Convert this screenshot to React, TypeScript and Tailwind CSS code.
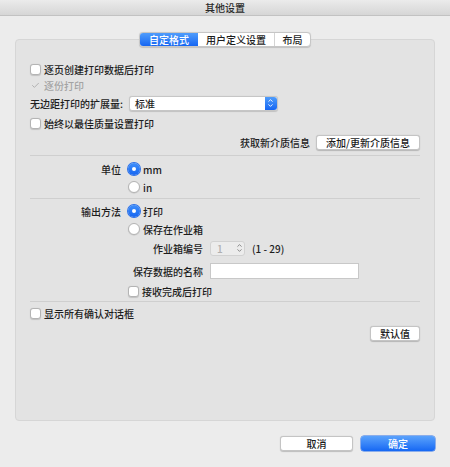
import { Check, ChevronDown, ChevronUp } from "lucide-react";

const font = "font-['Noto_Sans_CJK_SC','Noto_Sans',sans-serif]";

function CheckBox({ checked = false, disabled = false }: { checked?: boolean; disabled?: boolean }) {
  return (
    <span
      className={`flex size-[11px] shrink-0 items-center justify-center rounded-[3px] ${
        disabled ? "" : "border border-[#b4b4b4] bg-white shadow-[0_0.5px_1px_rgba(0,0,0,0.15)]"
      }`}
    >
      {checked && <Check className="size-[9px] text-[#a0a0a0]" strokeWidth={2} />}
    </span>
  );
}

function Radio({ on = false }: { on?: boolean }) {
  return on ? (
    <span className="flex size-[12px] shrink-0 items-center justify-center rounded-full bg-gradient-to-b from-[#3f8ffb] to-[#1665f1] shadow-[0_0_0_1px_#2a6fe8]">
      <span className="size-[4px] rounded-full bg-white" />
    </span>
  ) : (
    <span className="size-[12px] shrink-0 rounded-full border border-[#b4b4b4] bg-white shadow-[0_0.5px_1px_rgba(0,0,0,0.15)]" />
  );
}

function Button({ label, className = "" }: { label: string; className?: string }) {
  return (
    <button
      type="button"
      className={`flex h-[15px] items-center justify-center rounded-[3px] border border-[#c4c4c4] bg-white text-[10px] font-medium text-[#1a1a1a] shadow-[0_0.5px_1px_rgba(0,0,0,0.2)] ${className}`}
    >
      {label}
    </button>
  );
}

function Separator() {
  return <div className="h-px bg-[#cfcfcf]" />;
}

export default function App() {
  return (
    <div className={`flex h-[467px] w-[450px] flex-col bg-[#ececec] text-[10px] font-medium text-[#1d1d1d] ${font}`}>
      {/* Title bar */}
      <div className="flex h-[16px] shrink-0 items-center justify-center border-b border-[#c2c2c2] bg-gradient-to-b from-[#ebebeb] to-[#d6d6d6] text-[10px] text-[#2a2a2a]">
        其他设置
      </div>

      <div className="flex flex-col px-[15px] pt-[16px]">
        {/* Tabs */}
        <div className="relative z-10 mx-auto flex h-[15px] w-[172px] overflow-hidden rounded-[4px] border border-[#c6c6c6] bg-white shadow-[0_0.5px_1px_rgba(0,0,0,0.15)]">
          <div className="flex w-[58px] items-center justify-center bg-gradient-to-b from-[#4f9cfb] to-[#1565f2] text-white">
            自定格式
          </div>
          <div className="flex w-[77px] items-center justify-center border-r border-[#d4d4d4]">用户定义设置</div>
          <div className="flex flex-1 items-center justify-center">布局</div>
        </div>

        {/* Group box */}
        <div className="-mt-[8px] flex h-[382px] flex-col rounded-[4px] border border-[#d6d6d6] bg-[#e3e3e3] px-[14px] pt-[21px]">
          <div className="flex h-[16px] items-center gap-[3px]">
            <CheckBox />
            <span>逐页创建打印数据后打印</span>
          </div>
          <div className="flex h-[16px] items-center gap-[3px] text-[#a3a3a3]">
            <CheckBox checked disabled />
            <span>逐份打印</span>
          </div>
          <div className="flex h-[20px] items-center gap-[6px]">
            <span>无边距打印的扩展量:</span>
            <div className="flex h-[15px] w-[149px] items-center rounded-[3px] border border-[#c6c6c6] bg-white shadow-[0_0.5px_1px_rgba(0,0,0,0.15)]">
              <span className="flex-1 pl-[5px]">标准</span>
              <span className="flex h-full w-[12px] flex-col items-center justify-center rounded-r-[3px] bg-gradient-to-b from-[#4f9cfb] to-[#1565f2]">
                <ChevronUp className="-mb-[2px] size-[7px] text-white" strokeWidth={3} />
                <ChevronDown className="size-[7px] text-white" strokeWidth={3} />
              </span>
            </div>
          </div>
          <div className="flex h-[20px] items-center gap-[3px]">
            <CheckBox />
            <span>始终以最佳质量设置打印</span>
          </div>
          <div className="flex h-[18px] items-center justify-end gap-[6px]">
            <span>获取新介质信息</span>
            <Button label="添加/更新介质信息" className="w-[104px]" />
          </div>

          <div className="mt-[4px]">
            <Separator />
          </div>

          <div className="mt-[4px] flex">
            <span className="flex h-[18px] w-[91px] items-center justify-end">单位</span>
            <div className="ml-[7px] flex flex-col">
              <div className="flex h-[18px] items-center gap-[3px]">
                <Radio on />
                <span>mm</span>
              </div>
              <div className="flex h-[18px] items-center gap-[3px]">
                <Radio />
                <span>in</span>
              </div>
            </div>
          </div>

          <div className="mt-[2px]">
            <Separator />
          </div>

          <div className="mt-[3px] flex">
            <span className="flex h-[18px] w-[91px] items-center justify-end">输出方法</span>
            <div className="ml-[7px] flex flex-1 flex-col">
              <div className="flex h-[18px] items-center gap-[3px]">
                <Radio on />
                <span>打印</span>
              </div>
              <div className="flex h-[18px] items-center gap-[3px]">
                <Radio />
                <span>保存在作业箱</span>
              </div>
              <div className="flex h-[20px] items-center">
                <span className="w-[75px] text-right">作业箱编号</span>
                <div className="ml-[7px] flex h-[15px] w-[35px] items-center rounded-[3px] border border-[#d2d2d2] bg-[#ececec] pl-[6px] text-[#b0b0b0]">
                  <span className="flex-1">1</span>
                  <span className="flex w-[10px] flex-col items-center">
                    <ChevronUp className="-mb-[2px] size-[7px] text-[#666]" strokeWidth={2.5} />
                    <ChevronDown className="size-[7px] text-[#666]" strokeWidth={2.5} />
                  </span>
                </div>
                <span className="ml-[7px]">(1 - 29)</span>
              </div>
              <div className="flex h-[26px] items-center">
                <span className="w-[75px] text-right">保存数据的名称</span>
                <div className="ml-[7px] h-[16px] w-[149px] border border-[#c8c8c8] bg-white" />
              </div>
              <div className="flex h-[14px] items-center gap-[3px]">
                <CheckBox />
                <span>接收完成后打印</span>
              </div>
            </div>
          </div>

          <div className="mt-[3px]">
            <Separator />
          </div>

          <div className="mt-[2px] flex h-[18px] items-center gap-[3px]">
            <CheckBox />
            <span>显示所有确认对话框</span>
          </div>
          <div className="mt-[4px] flex justify-end">
            <Button label="默认值" className="w-[50px]" />
          </div>
        </div>

        {/* Footer buttons */}
        <div className="mt-[15px] flex justify-end gap-[8px]">
          <Button label="取消" className="w-[73px]" />
          <button
            type="button"
            className="flex h-[15px] w-[74px] items-center justify-center rounded-[3px] bg-gradient-to-b from-[#5aa2fc] to-[#1567f3] text-[10px] font-medium text-white shadow-[0_0_0_0.5px_#2a6fe8]"
          >
            确定
          </button>
        </div>
      </div>
    </div>
  );
}
